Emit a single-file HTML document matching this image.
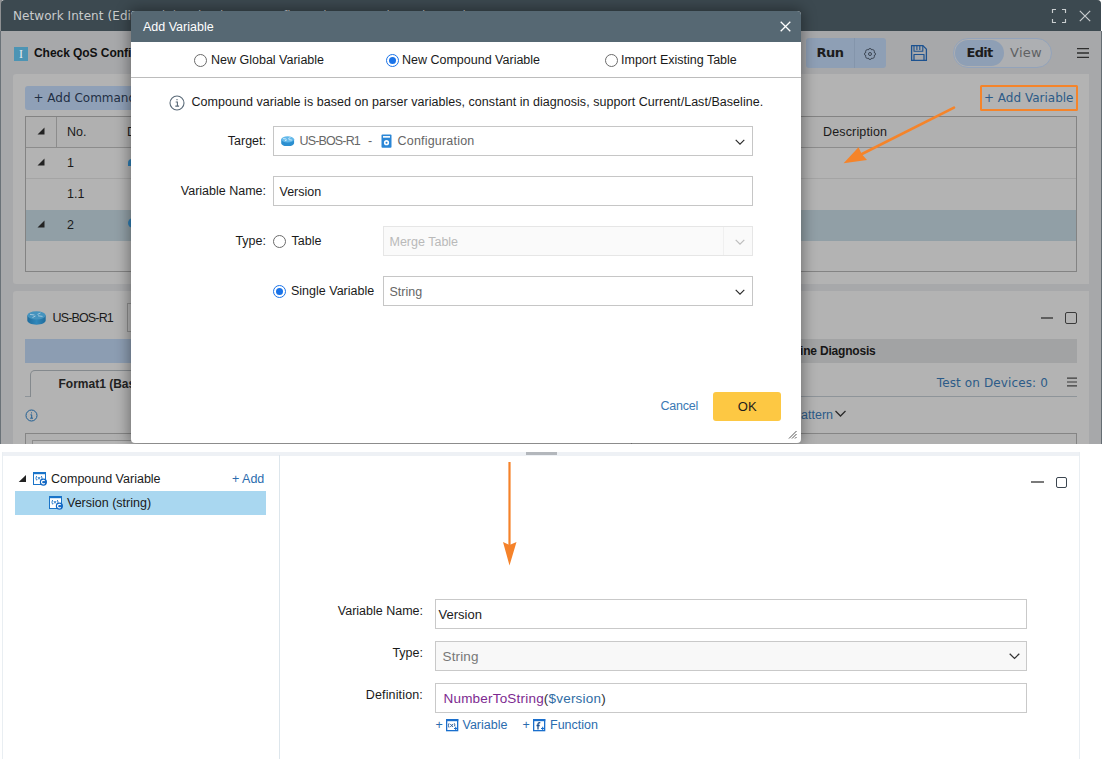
<!DOCTYPE html>
<html lang="en">
<head>
<meta charset="utf-8">
<title>Add Variable</title>
<style>
*{box-sizing:border-box;margin:0;padding:0}
html,body{width:1102px;height:759px;overflow:hidden;background:#fff}
body{position:relative;font-family:"Liberation Sans",sans-serif;font-size:12.5px;color:#1a1a1a}
.a{position:absolute}
.t{position:absolute;white-space:nowrap;line-height:16px}
.dv{font-family:"DejaVu Sans","Liberation Sans",sans-serif;font-size:12px}
.b{font-weight:bold}
#top{left:0;top:0;width:1102px;height:444px;overflow:hidden;background:#fff}
#win{left:1px;top:0;width:1100px;height:460px;background:#a7a8aa;border-radius:4px 4px 0 0;overflow:hidden}
#winbody{left:0;top:31px;width:1100px;height:430px;background:#a7a8aa}
#tbar{left:0;top:0;width:1100px;height:31px;background:#3c4950}
.panel{background:#b3b3b3;border-radius:3px 0 0 3px}
.radio{position:absolute;width:13px;height:13px;border-radius:50%;border:1px solid #6b6b6b;background:#fff}
.radio.on{border:1.500px solid #1a73e8}
.radio.on::after{content:"";position:absolute;left:1.500px;top:1.500px;width:7px;height:7px;border-radius:50%;background:#1a73e8}
.inp{position:absolute;border:1px solid #c6c6c6;background:#fff}
</style>
</head>
<body>

<!-- ================= TOP (dimmed window) ================= -->
<div id="top" class="a">
 <div class="a" style="left:0;top:0;width:1.500px;height:31px;background:#8e9092"></div><div class="a" style="left:0;top:31px;width:1.500px;height:420px;background:#6a7278"></div><div class="a" style="left:1100.500px;top:31px;width:2px;height:420px;background:#656d73"></div>
 <div id="win" class="a">
  <div id="tbar" class="a"></div>
  <div id="winbody" class="a"></div>
 </div>
 <div class="t dv" id="wtitle" style="left:13px;top:8px;color:#c9cbcc;letter-spacing:0.08px">Network Intent (Edit Mode) - Check QoS Configuration on Each Device Path</div>

 <!-- title bar icons -->
 <svg class="a" style="left:1051px;top:8px" width="16" height="16" viewBox="0 0 16 16" fill="none" stroke="#c9cdcf" stroke-width="1.150"><path d="M1.5 5V1.5H5M11 1.5h3.5V5M14.5 11v3.5H11M5 14.5H1.5V11"/></svg>
 <svg class="a" style="left:1079px;top:10px" width="12" height="12" viewBox="0 0 12 12" fill="none" stroke="#c9cdcf" stroke-width="1.200"><path d="M0.8 0.8l10.4 10.4M11.2 0.8L0.8 11.2"/></svg>

 <!-- header row -->
 <div class="a" style="left:14px;top:47px;width:14px;height:14px;background:#4c94b4"></div>
 <div class="t" style="left:19px;top:46px;font-family:'Liberation Serif',serif;font-size:12px;color:#e4ecf1">I</div>
 <div class="t b" id="chk" style="left:34px;top:45px;font-size:12px;color:#111;letter-spacing:-0.05px">Check QoS Configuration</div>

 <!-- Run button -->
 <div class="a" style="left:806px;top:38px;width:80px;height:29.5px;background:#8e9fb5;border-radius:3px"></div>
 <div class="a" style="left:854px;top:38px;width:1px;height:29.5px;background:#8495ab"></div>
 <div class="t dv b" id="run" style="left:816.5px;top:45px;font-size:13px;color:#1c1c1c;letter-spacing:-0.45px">Run</div>
 <svg class="a" style="left:863px;top:46.800px" width="14" height="14" viewBox="0 0 14 14" fill="none" stroke="#3b4552" stroke-width="1"><path d="M8.70 2.89A1.75 1.75 0 0 1 11.11 5.30A1.75 1.75 0 0 1 11.11 8.70A1.75 1.75 0 0 1 8.70 11.11A1.75 1.75 0 0 1 5.30 11.11A1.75 1.75 0 0 1 2.89 8.70A1.75 1.75 0 0 1 2.89 5.30A1.75 1.75 0 0 1 5.30 2.89A1.75 1.75 0 0 1 8.70 2.89z"/><circle cx="7" cy="7" r="1.500"/></svg>
 <!-- save icon -->
 <svg class="a" style="left:910px;top:44px" width="18" height="18" viewBox="0 0 18 18" fill="none" stroke="#1c5290" stroke-width="1.300" stroke-linejoin="round"><path d="M1.600 1.600h11.300l3.500 3.500v11.300h-14.800z"/><path d="M4 1.600v5.600h8.800v-5.600M6.900 2v4M9.800 2v4" stroke-width="1.100"/><path d="M4 16.400v-5.900h10v5.900" stroke-width="1.200"/></svg>
 <!-- edit/view -->
 <div class="a" style="left:952.5px;top:38px;width:99px;height:29.5px;border:1px solid #93a3ba;border-radius:15px;background:#adafb2"></div>
 <div class="a" style="left:954.5px;top:40px;width:49px;height:25.5px;border-radius:13px;background:#8e9fb5"></div>
 <div class="t dv b" id="edit" style="left:966.5px;top:45px;font-size:13px;color:#1c1c1c;letter-spacing:-0.7px">Edit</div>
 <div class="t dv" id="view" style="left:1010px;top:45px;font-size:13px;color:#5f6163;letter-spacing:0.3px">View</div>
 <svg class="a" style="left:1077px;top:47px" width="12" height="12" viewBox="0 0 12 12" stroke="#2e2e2e" stroke-width="1.3"><path d="M0 1.6h12M0 6h12M0 10.4h12"/></svg>

 <!-- Panel 1 : command table -->
 <div class="a panel" style="left:13px;top:74px;width:1076px;height:209.800px"></div>
 <div class="a" style="left:25px;top:86px;width:140px;height:24px;background:#8fa0b7;border-radius:3px"></div>
 <div class="t dv" id="addcmd" style="left:33.5px;top:90px;color:#1f2f44">+ Add Command</div>

 <div class="a" style="left:25px;top:116px;width:1052px;height:155.5px;border:1px solid #838383"></div>
 <div class="a" style="left:26px;top:117px;width:1050px;height:31px;background:#b0b0b0;border-bottom:1px solid #8c8c8c"></div>
 <div class="a" style="left:56px;top:117px;width:1px;height:30px;background:#8c8c8c"></div>
 <div class="a" style="left:26px;top:178px;width:1050px;height:1px;background:#a4a4a4"></div>
 <div class="a" style="left:26px;top:209.5px;width:1050px;height:31px;background:#919fa6"></div>
 <!-- triangles -->
 <svg class="a" style="left:37px;top:127px" width="8" height="8" viewBox="0 0 8 8"><path d="M7.5 0.5v7h-7z" fill="#222"/></svg>
 <svg class="a" style="left:37px;top:158px" width="8" height="8" viewBox="0 0 8 8"><path d="M7.5 0.5v7h-7z" fill="#222"/></svg>
 <svg class="a" style="left:37px;top:220px" width="8" height="8" viewBox="0 0 8 8"><path d="M7.5 0.5v7h-7z" fill="#222"/></svg>
 <div class="a" style="left:127.500px;top:159px;width:8px;height:7px;background:#2f7fb5;border-radius:4px 4px 0 0"></div><div class="a" style="left:127.500px;top:218px;width:10px;height:10px;background:#2f7fb5;border-radius:50%"></div>
 <div class="t" style="left:67px;top:123.5px">No.</div>
 <div class="t" style="left:67px;top:154.5px">1</div>
 <div class="t" style="left:67px;top:185.5px">1.1</div>
 <div class="t" style="left:67px;top:216.5px">2</div>
 <div class="t" style="left:127px;top:123.5px">Device</div>
 <div class="t" id="desc" style="left:823px;top:123.5px;letter-spacing:0.150px">Description</div>

 <!-- add variable highlight + arrow -->
 <div class="a" style="left:979.700px;top:84.500px;width:98px;height:26.500px;border:2.900px solid #f5842a;border-radius:1.500px"></div>
 <div class="t dv" id="addvar" style="left:984px;top:90px;color:#2c5b88">+ Add Variable</div>
 <svg class="a" style="left:836px;top:100px" width="130" height="70" viewBox="836 100 130 70"><path d="M954 107.700L857 156.500" stroke="#f5842a" stroke-width="2.600" stroke-linecap="round" fill="none"/><path d="M843.600 163.300L858.500 147.200L861.800 154.200L867 160z" fill="#f5842a"/></svg>

 <!-- Panel 2 : device -->
 <div class="a panel" style="left:13px;top:291px;width:1076px;height:170px"></div>
 <svg class="a" style="left:26.800px;top:310.700px" width="19" height="14" viewBox="0 0 19 14"><defs><linearGradient id="rg" x1="0" x2="1"><stop offset="0" stop-color="#1f6c9c"/><stop offset="0.500" stop-color="#3087ba"/><stop offset="1" stop-color="#1f6c9c"/></linearGradient></defs><path d="M0.300 4.400v5.200c0 2.300 4.100 4.100 9.200 4.100s9.200-1.800 9.200-4.100V4.400z" fill="url(#rg)"/><ellipse cx="9.500" cy="4.400" rx="9.200" ry="4.100" fill="#4593be"/><path d="M3 3.400l4.500 0.600M11 4.800l4.500 0.600M10.500 3.400l3-1.400M8.500 5l-3 1.500" stroke="#a9cce0" stroke-width="0.900"/></svg>
 <div class="t" id="usbos" style="left:52.5px;top:309.5px;letter-spacing:-0.85px;font-size:12.5px">US-BOS-R1</div>
 <div class="a" style="left:127px;top:303px;width:200px;height:29px;border:1px solid #8d8d8d;background:#b6b6b6"></div>
 <div class="a" style="left:1040.500px;top:317px;width:12.500px;height:2px;background:#5e5e5e"></div>
 <div class="a" style="left:1065px;top:312px;width:12px;height:12px;border:1.300px solid #3a3a3a;border-radius:2px"></div>
 <div class="a" style="left:25px;top:339px;width:600px;height:23.500px;background:#8c9db2"></div>
 <div class="a" style="left:625px;top:339px;width:452px;height:23.500px;background:#a2a3a4"></div>
 <div class="t b" id="diag" style="left:724px;top:342.500px;font-size:12px;letter-spacing:-0.200px;color:#161616">Current Baseline Diagnosis</div>
 <!-- tab -->
 <div class="a" style="left:25px;top:396px;width:1052px;height:1px;background:#8e9499"></div>
 <div class="a" style="left:30px;top:369.500px;width:160px;height:27.500px;border:1px solid #84898d;border-bottom:none;border-radius:5px 5px 0 0;background:#b3b3b3"></div>
 <div class="t b" id="fmt" style="left:58.500px;top:375.500px;font-size:12px;color:#222">Format1 (Baseline)</div>
 <div class="t dv" id="tod" style="left:936.800px;top:374.500px;color:#2c5b88;letter-spacing:0.120px">Test on Devices: 0</div>
 <svg class="a" style="left:1067px;top:377px" width="10" height="10" viewBox="0 0 10 10" stroke="#3b3b3b" stroke-width="1.200"><path d="M0 1.200h10M0 5h10M0 8.800h10"/></svg>
 <svg class="a" style="left:25px;top:408.500px" width="13" height="13" viewBox="0 0 13 13" fill="none" stroke="#1f5e93" stroke-width="1"><circle cx="6.500" cy="6.500" r="5.500"/><path d="M5.500 5.800h1.200v3.200M5.200 9.200h2.800M6.500 3.400v1" /></svg>
 <div class="t" id="pat" style="left:758px;top:407px;color:#2c5b88;font-size:12.500px">Show Pattern</div>
 <svg class="a" style="left:835px;top:410px" width="11" height="8" viewBox="0 0 11 8" fill="none" stroke="#2a2a2a" stroke-width="1.300"><path d="M0.500 1l5 5 5-5"/></svg>
 <div class="a" style="left:25px;top:433px;width:1052px;height:40px;border:1px solid #858585;background:#b0b0b0"></div>
 <div class="a" style="left:32px;top:440px;width:600px;height:40px;border:1px solid #8c8c8c;background:#b4b4b4"></div>
</div>


<!-- ================= DIALOG ================= -->
<div class="a" id="dlgclip" style="left:0;top:0;width:1102px;height:444px;overflow:hidden">
<div class="a" id="dlg" style="left:131px;top:11px;width:670px;height:432px;background:#fff;border-radius:4px;box-shadow:0 0 14px 2px rgba(0,0,0,0.380)">
 <div class="a" style="left:0;top:0;width:670px;height:31px;background:#566873;border-radius:4px 4px 0 0"></div>
 <div class="t" id="dtitle" style="left:12px;top:7.5px;color:#fff;font-size:12.5px">Add Variable</div>
 <svg class="a" style="left:648.600px;top:10px" width="11" height="11" viewBox="0 0 11 11" fill="none" stroke="#fff" stroke-width="1.3"><path d="M0.7 0.7l9.600 9.600M10.300 0.700L0.700 10.300"/></svg>

 <!-- radio row -->
 <div class="radio" style="left:62.500px;top:43px"></div>
 <div class="t" id="r1" style="left:80px;top:41px">New Global Variable</div>
 <div class="radio on" style="left:255px;top:43px"></div>
 <div class="t" id="r2" style="left:271px;top:41px">New Compound Variable</div>
 <div class="radio" style="left:473.500px;top:43px"></div>
 <div class="t" id="r3" style="left:490px;top:41px">Import Existing Table</div>
 <div class="a" style="left:0;top:66px;width:670px;height:1px;background:#bcbcbc"></div>

 <!-- info -->
 <svg class="a" style="left:38px;top:83.500px" width="16" height="16" viewBox="0 0 16 16" fill="none" stroke="#5a6a78" stroke-width="1.100"><circle cx="8" cy="8" r="7"/><path d="M6.700 7h1.700v3.900M6.300 11.100h3.800M8 4v1.300"/></svg>
 <div class="t" id="info" style="left:60.500px;top:83px;letter-spacing:0.040px">Compound variable is based on parser variables, constant in diagnosis, support Current/Last/Baseline.</div>

 <!-- Target -->
 <div class="t" id="ltarget" style="right:535px;top:122px">Target:</div>
 <div class="inp" style="left:142px;top:115px;width:480px;height:30px"></div>
 <svg class="a" style="left:150.300px;top:124.500px" width="13.300" height="10.600" viewBox="0 0 19 14" preserveAspectRatio="none"><path d="M0.300 4.400v5.200c0 2.300 4.100 4.100 9.200 4.100s9.200-1.800 9.200-4.100V4.400z" fill="#2b8fd0"/><ellipse cx="9.500" cy="4.400" rx="9.200" ry="4.100" fill="#62b8ea"/><path d="M3 3.400l4.500 0.600M11 4.800l4.500 0.600M10.500 3.400l3-1.400M8.500 5l-3 1.500" stroke="#eaf5fc" stroke-width="1.100"/></svg>
 <div class="t" id="dusbos" style="left:168.500px;top:122px;color:#666;letter-spacing:-0.850px">US-BOS-R1</div>
 <div class="t" style="left:237px;top:122px;color:#666">-</div>
 <svg class="a" style="left:250.300px;top:122.600px" width="11" height="14.300" viewBox="0 0 11 14" preserveAspectRatio="none"><rect x="0.500" y="0.500" width="10" height="13" rx="1" fill="#2a86d6"/><rect x="2" y="2" width="7" height="1.600" fill="#fff"/><circle cx="5.500" cy="8.500" r="2.600" fill="#fff"/><circle cx="5.500" cy="8.500" r="1" fill="#2a86d6"/></svg>
 <div class="t" id="dconf" style="left:266.500px;top:122px;color:#666;letter-spacing:0.200px">Configuration</div>
 <svg class="a" style="left:604px;top:127.500px" width="10" height="7" viewBox="0 0 10 7" fill="none" stroke="#2a2a2a" stroke-width="1.150"><path d="M0.700 0.800l4.300 4.400 4.300-4.400"/></svg>

 <!-- Variable Name -->
 <div class="t" id="lvn" style="right:535px;top:172px">Variable Name:</div>
 <div class="inp" style="left:142px;top:165px;width:480px;height:30px"></div>
 <div class="t" id="dver" style="left:148.500px;top:173px">Version</div>

 <!-- Type -->
 <div class="t" id="ltype" style="right:535px;top:222px">Type:</div>
 <div class="radio" style="left:142px;top:224px"></div>
 <div class="t" id="ltable" style="left:160.500px;top:222px">Table</div>
 <div class="inp" style="left:252px;top:215px;width:370px;height:30px;border-color:#e6e6e6;background:#fafafa"></div>
 <div class="a" style="left:592px;top:216px;width:1px;height:28px;background:#f0f0f0"></div>
 <div class="t" id="mt" style="left:258.500px;top:223px;color:#b9b9b9">Merge Table</div>
 <svg class="a" style="left:604px;top:227.500px" width="10" height="7" viewBox="0 0 10 7" fill="none" stroke="#bdbdbd" stroke-width="1.200"><path d="M0.700 0.800l4.300 4.400 4.300-4.400"/></svg>

 <div class="radio on" style="left:142px;top:274px"></div>
 <div class="t" id="lsv" style="left:160px;top:272px">Single Variable</div>
 <div class="inp" style="left:252px;top:265px;width:370px;height:30px"></div>
 <div class="t" id="dstr" style="left:258.500px;top:273px;color:#666">String</div>
 <svg class="a" style="left:604px;top:277.500px" width="10" height="7" viewBox="0 0 10 7" fill="none" stroke="#2a2a2a" stroke-width="1.150"><path d="M0.700 0.800l4.300 4.400 4.300-4.400"/></svg>

 <!-- buttons -->
 <div class="t" id="cancel" style="left:529.500px;top:387px;color:#3a79b4;letter-spacing:-0.250px">Cancel</div>
 <div class="a" style="left:582px;top:380.500px;width:68px;height:29px;background:#fdc843;border-radius:3px"></div>
 <div class="t" id="ok" style="left:606.800px;top:387.500px;font-size:13px;color:#1d1d1d">OK</div>
 <svg class="a" style="left:657px;top:419px" width="9" height="9" viewBox="0 0 9 9" stroke="#555" stroke-width="1"><path d="M8.500 1L1 8.500M8.500 4L4 8.500M8.500 7L7 8.500"/></svg>
</div>
</div>


<!-- ================= BOTTOM ================= -->
<div class="a" id="bot" style="left:2px;top:452px;width:1078px;height:310px;background:#fff;border-left:1px solid #e9eef2;border-right:1px solid #e9eef2;overflow:hidden">
 <div class="a" style="left:0;top:0;width:1077px;height:3.500px;background:#eef1f5"></div>
 <div class="a" style="left:523px;top:0;width:31px;height:2.500px;background:#b3b7bc"></div>
 <div class="a" style="left:275.500px;top:3px;width:1px;height:310px;background:#dde6ec"></div>
</div>
<div class="a" id="botc" style="left:0;top:452px;width:1102px;height:307px">
 <svg class="a" style="left:18.200px;top:22.200px" width="9" height="9" viewBox="0 0 9 9"><path d="M8 1v7h-7.300z" fill="#222"/></svg>
 <svg class="a" style="left:33px;top:20px" width="15" height="15" viewBox="0 0 15 15"><rect x="0.500" y="0.500" width="12" height="12" fill="#fff" stroke="#1a74c9" stroke-width="1"/><rect x="0" y="0" width="13" height="2.200" fill="#1a74c9"/><path d="M3.600 4q-1.300 2.200 0 4.400M8.400 4q1.300 2.200 0 4.400M4.800 5l2.400 2.600M7.200 5l-2.400 2.600" stroke="#2f7fcc" stroke-width="1" fill="none"/><circle cx="10.400" cy="10.100" r="3.600" fill="#1268c4"/><path d="M11.700 8.900a1.800 1.800 0 1 0 0 2.400" stroke="#fff" stroke-width="1.200" fill="none"/></svg>
 <div class="t" id="cv" style="left:51px;top:18.500px">Compound Variable</div>
 <div class="t" id="badd" style="left:232px;top:18.500px;color:#2b6cae">+ Add</div>
 <div class="a" style="left:15px;top:39px;width:251px;height:24px;background:#a9d7f0"></div>
 <svg class="a" style="left:48.900px;top:44.200px" width="15" height="15" viewBox="0 0 15 15"><rect x="0.500" y="0.500" width="12" height="12" fill="#fff" stroke="#1a74c9" stroke-width="1"/><rect x="0" y="0" width="13" height="2.200" fill="#1a74c9"/><path d="M3.600 4q-1.300 2.200 0 4.400M8.400 4q1.300 2.200 0 4.400M4.800 5l2.400 2.600M7.200 5l-2.400 2.600" stroke="#2f7fcc" stroke-width="1" fill="none"/><circle cx="10.400" cy="10.100" r="3.600" fill="#1268c4"/><path d="M11.700 8.900a1.800 1.800 0 1 0 0 2.400" stroke="#fff" stroke-width="1.200" fill="none"/></svg>
 <div class="t" id="vs" style="left:67px;top:43px">Version (string)</div>

 <!-- min / max -->
 <div class="a" style="left:1031px;top:29px;width:12.500px;height:2px;background:#7a7a7a"></div>
 <div class="a" style="left:1055.500px;top:24.500px;width:11.500px;height:11px;border:1.300px solid #3c4650;border-radius:2px"></div>

 <!-- arrow -->
 <svg class="a" style="left:500px;top:8px" width="20" height="108" viewBox="500 460 20 108"><path d="M509.500 462v84" stroke="#f5822a" stroke-width="2.200" fill="none"/><path d="M503 542l6.500 23.500 7-23.500-7 3z" fill="#f5822a"/></svg>

 <!-- form -->
 <div class="t" id="bvn" style="right:679px;top:150.500px">Variable Name:</div>
 <div class="inp" style="left:435px;top:147px;width:592px;height:29.500px;border-color:#c9c9c9"></div>
 <div class="t" id="bver" style="left:438.500px;top:154.500px;font-size:13px">Version</div>

 <div class="t" id="btype" style="right:679px;top:192.500px">Type:</div>
 <div class="inp" style="left:435px;top:189px;width:592px;height:29.500px;border-color:#c9c9c9;background:#f8f8f8"></div>
 <div class="t" id="bstr" style="left:442.500px;top:196.700px;color:#777;font-size:13.500px;letter-spacing:0.150px">String</div>
 <svg class="a" style="left:1009px;top:200.500px" width="11" height="7" viewBox="0 0 11 7" fill="none" stroke="#333" stroke-width="1.300"><path d="M0.700 0.800l4.800 4.600 4.800-4.600"/></svg>

 <div class="t" id="bdef" style="right:679px;top:234.500px;letter-spacing:0.150px">Definition:</div>
 <div class="inp" style="left:435px;top:231px;width:592px;height:30px;border-color:#c9c9c9"></div>
 <div class="t" id="bfn" style="left:443.500px;top:238.500px;font-size:13.500px;letter-spacing:0.200px"><span style="color:#7d2a90">NumberToString</span><span style="color:#333">(</span><span style="color:#2f6da4">$version</span><span style="color:#333">)</span></div>

 <div class="t" id="bpv" style="left:435.500px;top:265px;color:#2b6cae">+</div>
 <svg class="a" style="left:445.600px;top:266.700px" width="13" height="13" viewBox="0 0 13 13" fill="none"><rect x="0.650" y="0.650" width="11" height="11" stroke="#1a6fcd" stroke-width="1.300" fill="#fff"/><rect x="0" y="0" width="12.300" height="2.200" fill="#1a6fcd"/><path d="M3 4.300q-1.200 2.100 0 4.200M8.300 4.300q0.900 1.500 0.300 3M4.300 5l2.800 3M7.100 5l-2.800 3" stroke="#2d5f9a" stroke-width="1"/><path d="M9.700 7.800v3.400M8 9.500h3.400" stroke="#1a6fcd" stroke-width="1.100"/></svg>
 <div class="t" id="bvar" style="left:462.500px;top:265px;color:#2b6cae">Variable</div>
 <div class="t" id="bpf" style="left:522.500px;top:265px;color:#2b6cae">+</div>
 <svg class="a" style="left:532.900px;top:266.700px" width="13" height="13" viewBox="0 0 13 13" fill="none"><rect x="0.650" y="0.650" width="11" height="11" stroke="#1a6fcd" stroke-width="1.300" fill="#fff"/><rect x="0" y="0" width="12.300" height="2.200" fill="#1a6fcd"/><path d="M7.300 3.900c-1.800-0.500-2.300 0.400-2.300 1.600v4.900M3.500 6.500h3.200" stroke="#1a4f90" stroke-width="1.300"/><path d="M9.700 7.800v3.400M8 9.500h3.400" stroke="#1a6fcd" stroke-width="1.100"/></svg>
 <div class="t" id="bfun" style="left:550px;top:265px;color:#2b6cae">Function</div>
</div>

</body>
</html>
